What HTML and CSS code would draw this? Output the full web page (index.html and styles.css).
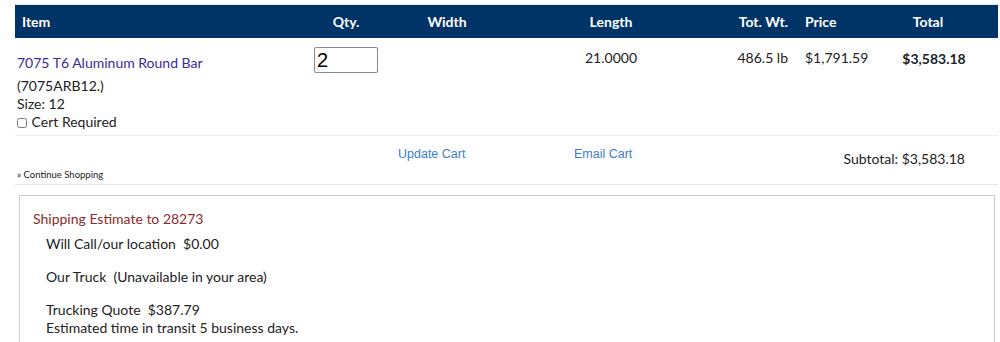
FILE: index.html
```html
<!DOCTYPE html>
<html lang="en">
<head>
  <meta charset="UTF-8">
  <meta name="viewport" content="width=device-width, initial-scale=1.0">

  <title>Shopping Cart</title>

  <link rel="stylesheet" href="styles.css">
</head>
<body>

<div class="cart">
  <table class="cart-table">
    <thead>
      <tr>
        <th class="col-item">Item</th>
        <th class="col-qty">Qty.</th>
        <th class="col-width">Width</th>
        <th class="col-length">Length</th>
        <th class="col-wt">Tot. Wt.</th>
        <th class="col-price">Price</th>
        <th class="col-total">Total</th>
      </tr>
    </thead>
    <tbody>
      <tr class="item-row">
        <td class="col-item">
          <a class="item-name" href="#">7075 T6 Aluminum Round Bar</a>
          <div class="item-sku">(7075ARB12.)</div>
          <div>Size: 12</div>
          <label class="cert"><input type="checkbox"> Cert Required</label>
        </td>
        <td class="col-qty"><input class="qty" type="text" value="2"></td>
        <td class="col-width"></td>
        <td class="col-length">21.0000</td>
        <td class="col-wt">486.5 lb</td>
        <td class="col-price">$1,791.59</td>
        <td class="col-total"><b>$3,583.18</b></td>
      </tr>
    </tbody>
  </table>

  <div class="cart-footer">
    <div class="continue"><a href="#">&raquo; Continue Shopping</a></div>
    <div class="action"><a href="#">Update Cart</a></div>
    <div class="action"><a href="#">Email Cart</a></div>
    <div class="subtotal">Subtotal: $3,583.18</div>
  </div>

  <div class="shipping">
    <h3>Shipping Estimate to 28273</h3>
    <p>Will Call/our location&nbsp; $0.00</p>
    <p>Our Truck&nbsp; (Unavailable in your area)</p>
    <p>Trucking Quote&nbsp; $387.79<br>Estimated time in transit 5 business days.</p>
  </div>
</div>

</body>
</html>
```

FILE: styles.css
```css
body {
  margin: 0;
  font-family: Lato, "Open Sans", sans-serif;
  font-size: 14px;
  color: #222;
  background: #fff;
}

.cart {
  margin: 4px 2px 0 15px;
  border-top: 1px solid #e8e8e8;
}

.cart-table {
  width: 100%;
  border-collapse: collapse;
  table-layout: fixed;
}

.cart-table th {
  background-color: #003366;
  color: #fff;
  font-weight: bold;
  font-size: 14px;
  height: 33px;
  padding: 0;
}

.cart-table td {
  vertical-align: top;
  padding: 10px 0 0;
}

.item-row td {
  border-bottom: 1px solid #eee;
  height: 85px;
}

.col-item { width: 278px; text-align: left; }
.col-qty { width: 92px; text-align: center; }
.col-width { width: 110px; text-align: center; }
.col-length { width: 218px; text-align: center; }
.col-wt { width: 68px; text-align: right; }
.col-price { width: 75px; text-align: left; }
.col-total { text-align: center; }

th.col-item { padding-left: 7px; }
th.col-wt, td.col-wt { padding-right: 7px; }
th.col-price, td.col-price { padding-left: 10px; }
th.col-total { padding-right: 22px; }
td.col-total { padding-top: 12px; padding-right: 10px; }
td.col-length, td.col-wt, td.col-price { padding-top: 11px; }
td.col-item { padding-left: 2px; width: 283px; line-height: 18px; }
td.col-qty { padding-top: 9px; }

.item-name {
  display: block;
  color: #3a2aa0;
  text-decoration: none;
  margin: 6px 0 5px;
}

.cert input {
  width: 10px;
  height: 10px;
  margin: 0 1px 0 0;
  vertical-align: -1px;
}

.qty {
  display: block;
  box-sizing: border-box;
  width: 64px;
  height: 26px;
  margin: 0 auto;
  padding: 0 2px;
  font-family: "Liberation Sans", Arial, sans-serif;
  font-size: 20px;
  border: 1px solid #888;
  border-radius: 2px;
  color: #000;
}

.cart-footer {
  display: grid;
  grid-template-columns: 383px 176px 146px 1fr;
  height: 48px;
  border-bottom: 1px solid #e6e6e6;
}

.continue {
  align-self: end;
  padding: 0 0 4px 2px;
  font-size: 9.5px;
}

.continue a {
  color: #222;
  text-decoration: none;
}

.action {
  padding-top: 11px;
  font-family: "Liberation Sans", Arial, sans-serif;
  font-size: 12.5px;
}

.action a {
  color: #3c7ccc;
  text-decoration: none;
}

.subtotal {
  text-align: right;
  padding: 14px 33px 0 0;
}

.shipping {
  margin: 10px 3px 0 4px;
  border: 1px solid #ccc;
  padding: 14px 13px 20px;
  height: 200px;
}

.shipping h3 {
  margin: 0 0 8px;
  font-size: 14px;
  font-weight: normal;
  color: #8b2c2c;
}

.shipping p {
  margin: 0 0 15px 13px;
  line-height: 18px;
}
```
